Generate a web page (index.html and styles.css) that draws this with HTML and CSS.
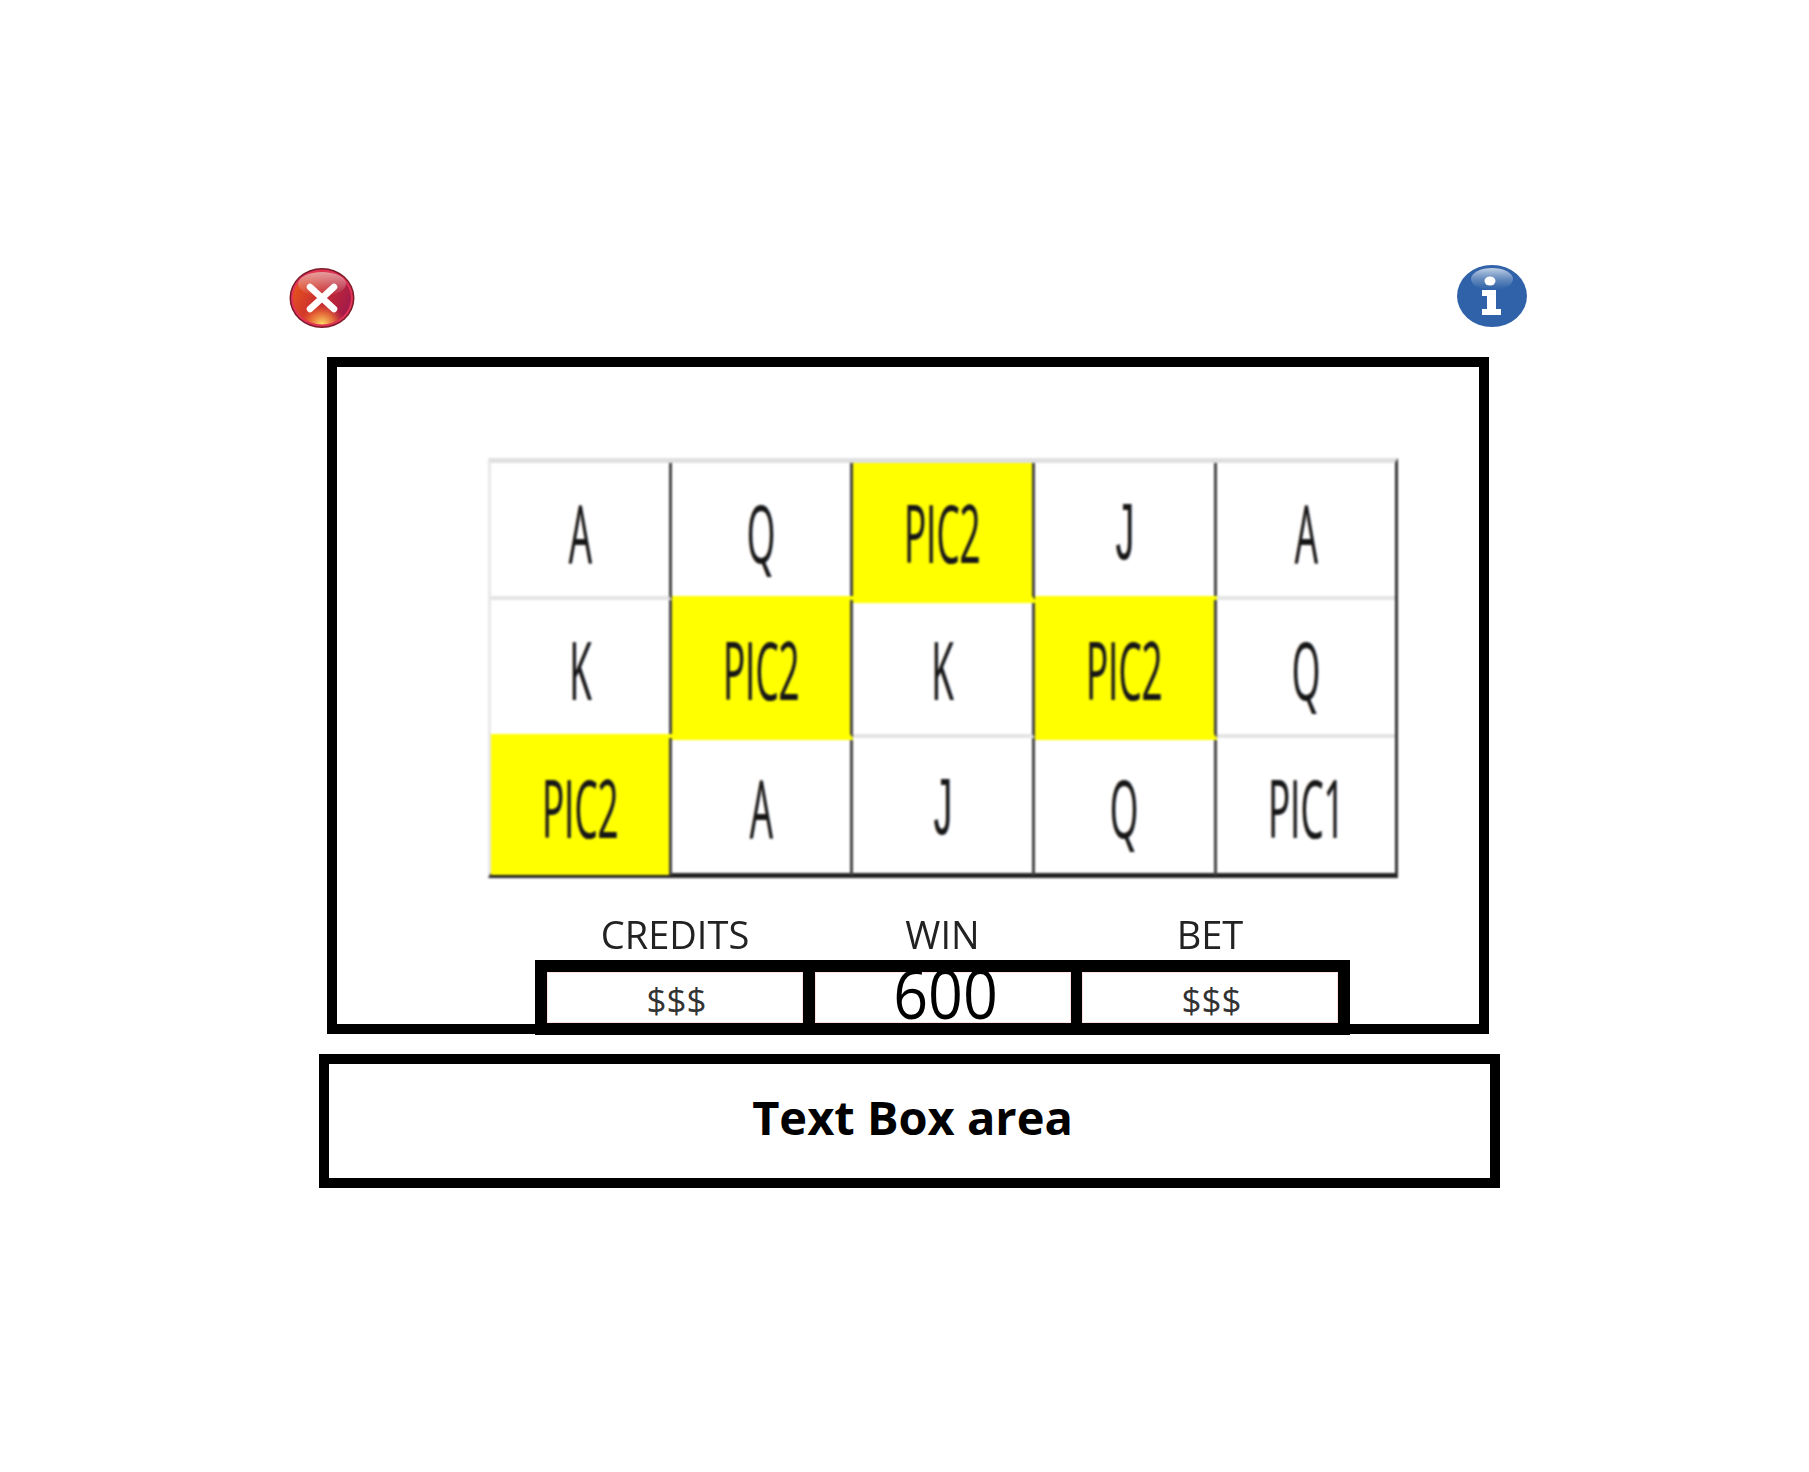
FILE: index.html
```html
<!DOCTYPE html>
<html lang="en">
<head>
<meta charset="utf-8">
<title>Slot game</title>
<link rel="stylesheet" href="styles.css">
</head>
<body>
<main class="page">
  <div class="icons">
    <svg class="icon-close" viewBox="0 0 66 62" aria-label="Close">
      <defs>
        <linearGradient id="redBody" x1="0" y1="0.2" x2="1" y2="0.6">
          <stop offset="0" stop-color="#e8561c"/>
          <stop offset="0.5" stop-color="#c92c30"/>
          <stop offset="1" stop-color="#a31a4a"/>
        </linearGradient>
        <linearGradient id="redGloss" x1="0" y1="0" x2="0" y2="1">
          <stop offset="0" stop-color="#e8aeb2" stop-opacity="0.85"/>
          <stop offset="1" stop-color="#e8aeb2" stop-opacity="0"/>
        </linearGradient>
        <radialGradient id="redGlow" cx="0.5" cy="1" r="0.4">
          <stop offset="0" stop-color="#ffe36a"/>
          <stop offset="0.55" stop-color="#f5863a" stop-opacity="0.7"/>
          <stop offset="1" stop-color="#e8501f" stop-opacity="0"/>
        </radialGradient>
      </defs>
      <ellipse cx="33" cy="31" rx="32.5" ry="30" fill="#7c1a26"/>
      <ellipse cx="33" cy="31" rx="31" ry="28.5" fill="#e23358"/>
      <ellipse cx="33" cy="31" rx="29" ry="26.5" fill="url(#redBody)"/>
      <ellipse cx="33" cy="31" rx="29" ry="26.5" fill="url(#redGlow)"/>
      <ellipse cx="33" cy="17" rx="24" ry="12" fill="url(#redGloss)"/>
      <path d="M21 20 L45 42 M45 20 L21 42" stroke="#fff" stroke-width="6.5" stroke-linecap="round"/>
    </svg>
    <svg class="icon-info" viewBox="0 0 70 62" aria-label="Info">
      <defs>
        <linearGradient id="blueGloss" x1="0" y1="0" x2="0" y2="1">
          <stop offset="0" stop-color="#c9d8ea" stop-opacity="0.95"/>
          <stop offset="1" stop-color="#7f9fca" stop-opacity="0"/>
        </linearGradient>
      </defs>
      <ellipse cx="35" cy="31" rx="35" ry="31" fill="#2f62a8"/>
      <ellipse cx="35" cy="14" rx="21" ry="11" fill="url(#blueGloss)"/>
      <ellipse cx="33" cy="16" rx="5.5" ry="4.5" fill="#fff"/>
      <path d="M25 25 H39 V44 H44 V50 H25 V44 H30 V31 H25 Z" fill="#fff"/>
    </svg>
  </div>

  <section class="board">
    <div class="reels">
      <div class="cell"><span class="glyph">A</span></div>
      <div class="cell"><span class="glyph">Q</span></div>
      <div class="cell hit hit-top"><span class="glyph">PIC2</span></div>
      <div class="cell"><span class="glyph glyph-j">J</span></div>
      <div class="cell last"><span class="glyph">A</span></div>

      <div class="cell"><span class="glyph">K</span></div>
      <div class="cell hit hit-mid"><span class="glyph">PIC2</span></div>
      <div class="cell"><span class="glyph">K</span></div>
      <div class="cell hit hit-mid"><span class="glyph">PIC2</span></div>
      <div class="cell last"><span class="glyph">Q</span></div>

      <div class="cell bottom hit hit-low"><span class="glyph">PIC2</span></div>
      <div class="cell bottom"><span class="glyph">A</span></div>
      <div class="cell bottom"><span class="glyph glyph-j">J</span></div>
      <div class="cell bottom"><span class="glyph">Q</span></div>
      <div class="cell bottom last"><span class="glyph">PIC1</span></div>
    </div>

    <div class="stats">
      <div class="stat-labels">
        <span class="stat-label">CREDITS</span>
        <span class="stat-label">WIN</span>
        <span class="stat-label">BET</span>
      </div>
      <div class="stat-values">
        <div class="stat-cell">$$$</div>
        <div class="stat-cell stat-win"><span class="win-digits">600</span></div>
        <div class="stat-cell">$$$</div>
      </div>
    </div>
  </section>

  <section class="textbox">Text Box area</section>
</main>
</body>
</html>
```

FILE: styles.css
```css
* { box-sizing: border-box; }

html, body {
  margin: 0;
  background: #fff;
}

body {
  font-family: "Open Sans", "Noto Sans", sans-serif;
  color: #000;
}

.page {
  width: 1809px;
  height: 1472px;
  padding: 265px 0 0 289px;
}

.icons {
  display: flex;
  justify-content: space-between;
  align-items: flex-start;
  width: 1239px;
  height: 92px;
}

.icon-close {
  width: 66px;
  height: 62px;
  margin-top: 2px;
}

.icon-info {
  width: 70px;
  height: 62px;
  margin-right: 1px;
}

.board {
  width: 1162px;
  height: 677px;
  margin-left: 38px;
  border: 10px solid #000;
  padding: 91px 0 0 151px;
}

.reels {
  display: grid;
  grid-template-columns: 181px 181px 182px 182px 1fr;
  grid-template-rows: 137px 138px 137px;
  width: 910px;
  height: 420px;
  border-top: 5px solid #e0e0e0;
  border-left: 3px solid #e8e8e8;
  border-right: 3px solid #333;
  border-bottom: 5px solid #222;
  filter: blur(0.8px);
}

.cell {
  position: relative;
  display: flex;
  align-items: center;
  justify-content: center;
  padding-top: 4px;
  border-right: 3px solid #444;
  border-bottom: 4px solid #e4e4e4;
}

.cell.last { border-right: 0; }
.cell.bottom {
  padding-top: 0;
  border-bottom: 0;
}

.hit {
  z-index: 1;
  background: #ff0;
  border-bottom-color: #ff0;
}

.hit-top { box-shadow: 0 3px 0 #ff0; }
.hit-mid { box-shadow: 0 -4px 0 #ff0, 0 2px 0 #ff0; }
.hit-low { box-shadow: 0 -4px 0 #ff0; }

.glyph {
  display: block;
  font-size: 80px;
  font-weight: 500;
  line-height: 1;
  color: #161616;
  transform: scaleX(0.46);
  text-shadow: 1px 0 0 rgba(0, 90, 220, 0.4), -1px 0 0 rgba(220, 110, 0, 0.4);
}

.glyph-j {
  font-family: "Liberation Sans", sans-serif;
  font-weight: 400;
}

.stats {
  width: 815px;
  margin: 8px 0 0 47px;
}

.stat-labels {
  display: flex;
  height: 74px;
  padding: 26px 12px 0;
  gap: 11.5px;
}

.stat-label {
  flex: 0 0 256px;
  text-align: center;
  font-size: 38px;
  line-height: 44px;
  color: #222;
  filter: blur(0.4px);
}

.stat-values {
  display: flex;
  gap: 11.5px;
  height: 75px;
  border: 12px solid #000;
  background: #000;
}

.stat-cell {
  flex: 0 0 256px;
  display: flex;
  align-items: center;
  justify-content: center;
  padding: 4px 0 0 3px;
  background: #fff;
  font-size: 35px;
  line-height: 1;
  color: #333;
  box-shadow: inset 0 0 0 1px #ffdfe2;
}

.stat-win {
  padding: 0 0 6px 6px;
  color: #000;
}

.win-digits {
  display: block;
  font-size: 61px;
  line-height: 0.8;
  transform: scaleY(1.1);
}

.textbox {
  display: flex;
  align-items: center;
  justify-content: center;
  width: 1181px;
  height: 134px;
  margin: 20px 0 0 30px;
  padding: 0 0 8px 6px;
  border: 10px solid #000;
  font-size: 47px;
  font-weight: 700;
}
```
